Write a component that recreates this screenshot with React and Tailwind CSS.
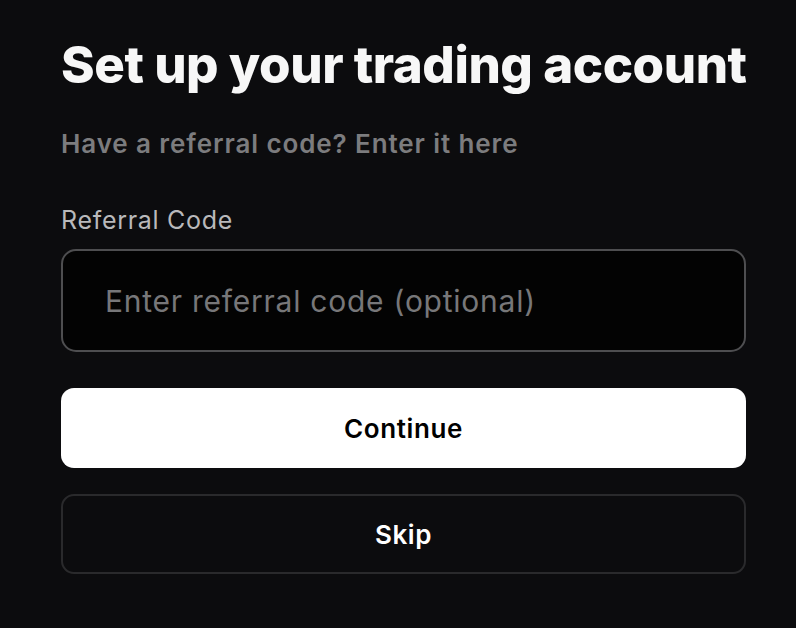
export default function App() {
  return (
    <div
      className="min-h-screen w-full bg-[#0c0c0e] px-[61px] pt-[34px]"
      style={{ fontFamily: "Inter, 'Liberation Sans', sans-serif" }}
    >
      <div className="flex w-[685px] flex-col">
        <h1 className="text-[51px] font-extrabold leading-[62px] tracking-[-0.45px] text-[#f7f7f7] whitespace-nowrap">
          Set up your trading account
        </h1>
        <p className="mt-[32px] text-[26px] font-semibold leading-[32px] tracking-[0.9px] text-[#7c7c7e] whitespace-nowrap">
          Have a referral code? Enter it here
        </p>
        <label className="mt-[44px] text-[25px] leading-[32px] tracking-[0.7px] text-[#b9b9bb]">
          Referral Code
        </label>
        <input
          type="text"
          placeholder="Enter referral code (optional)"
          className="mt-[13px] h-[103px] w-full rounded-[15px] border-2 border-[#4e4e50] bg-[#030303] px-[42px] text-[30px] tracking-[0.75px] text-white outline-none placeholder:text-[#777779]"
        />
        <button className="mt-[36px] h-[80px] w-full rounded-[13px] bg-white text-[26px] font-semibold tracking-[0.6px] text-black">
          Continue
        </button>
        <button className="mt-[26px] h-[80px] w-full rounded-[13px] border-2 border-[#2a2a2c] bg-transparent text-[26px] font-semibold tracking-[0.6px] text-white">
          Skip
        </button>
      </div>
    </div>
  );
}
